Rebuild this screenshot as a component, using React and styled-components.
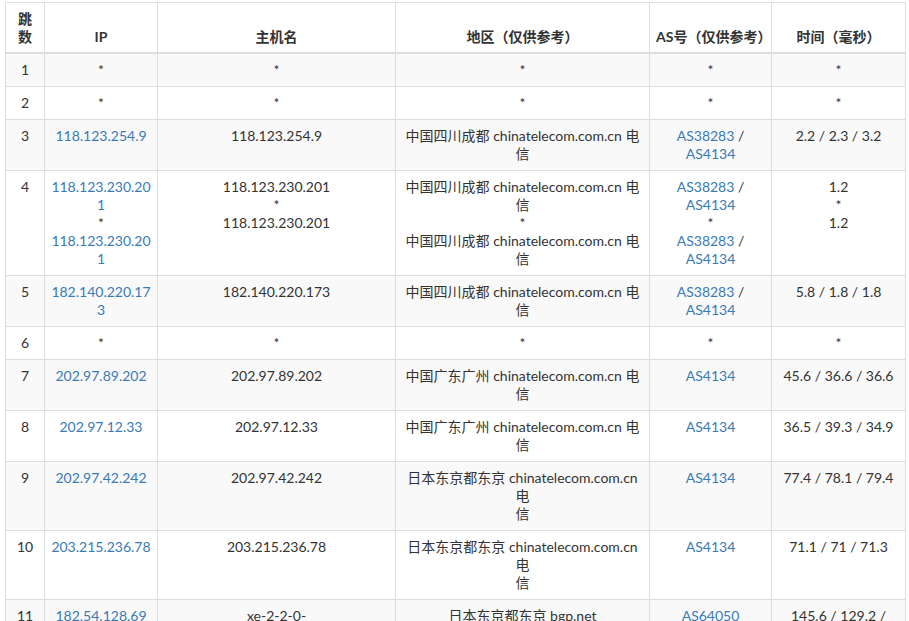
import React from "react";
import styled, { createGlobalStyle } from "styled-components";

const Global = createGlobalStyle`
  body { margin: 0; background: #fff; font-family: "Lato", "Noto Sans CJK SC", sans-serif; color: #333; }
`;
const Wrap = styled.div`padding: 2px 4px 0 5px;`;
const Table = styled.table`
  width: 900px; border-collapse: collapse; table-layout: fixed; font-size: 14px; line-height: 18px;
`;
const Th = styled.th`
  border: 1px solid #ddd; border-bottom: 2px solid #ddd; padding: 7px 6px 6px; font-weight: 700;
  vertical-align: bottom; text-align: center; color: #333;
`;
const Tr = styled.tr`background: ${p => (p.$odd ? "#f9f9f9" : "#fff")};`;
const Td = styled.td`
  border: 1px solid #ddd; padding: 7px 6px 7px; vertical-align: top; text-align: center; word-break: break-word;
`;
const A = styled.span`color: #3a7ab5;`;

const ws = [39, 113, 238, 254, 122, 134];
const S = "*";
const r = "中国四川成都 chinatelecom.com.cn 电信";
const g = "中国广东广州 chinatelecom.com.cn 电信";
const rows = [
  [[S], [S], [S], [S], [S]],
  [[S], [S], [S], [S], [S]],
  [["118.123.254.9"], ["118.123.254.9"], [r], ["AS38283 /|AS4134"], ["2.2 / 2.3 / 3.2"]],
  [["118.123.230.201", S, "118.123.230.201"], ["118.123.230.201", S, "118.123.230.201"], [r, S, r], ["AS38283 /|AS4134", S, "AS38283 /|AS4134"], ["1.2", S, "1.2"]],
  [["182.140.220.173"], ["182.140.220.173"], [r], ["AS38283 /|AS4134"], ["5.8 / 1.8 / 1.8"]],
  [[S], [S], [S], [S], [S]],
  [["202.97.89.202"], ["202.97.89.202"], [g], ["AS4134"], ["45.6 / 36.6 / 36.6"]],
  [["202.97.12.33"], ["202.97.12.33"], [g], ["AS4134"], ["36.5 / 39.3 / 34.9"]],
  [["202.97.42.242"], ["202.97.42.242"], ["日本东京都东京 chinatelecom.com.cn 电|信"], ["AS4134"], ["77.4 / 78.1 / 79.4"]],
  [["203.215.236.78"], ["203.215.236.78"], ["日本东京都东京 chinatelecom.com.cn 电|信"], ["AS4134"], ["71.1 / 71 / 71.3"]],
  [["182.54.128.69"], ["xe-2-2-0-|0.r01.tokyjp01.jp.bb.bgp.net"], ["日本东京都东京 bgp.net"], ["AS64050"], ["145.6 / 129.2 /|134.3"]],
  [["137.220.185.70"], ["137.220.185.70"], ["日本东京都东京 rackip.com"], ["AS64050"], ["78.6 / 79.1 / 77"]],
];

function Lines({ items, link }) {
  const out = [];
  items.forEach((it, i) => {
    if (i) out.push(<br key={"b" + i} />);
    if (it === S) { out.push(<span key={i}>*</span>); return; }
    it.split("|").forEach((p, k) => {
      if (k) out.push(<br key={`x${i}${k}`} />);
      if (link) {
        const m = p.match(/^(AS\d+|[\d.]+)(.*)$/);
        if (m) { out.push(<A key={`a${i}${k}`}>{m[1]}</A>); if (m[2]) out.push(<span key={`c${i}${k}`}>{m[2]}</span>); return; }
      }
      out.push(<span key={`t${i}${k}`}>{p}</span>);
    });
  });
  return out;
}

export default function App() {
  return (
    <Wrap>
      <Global />
      <Table>
        <colgroup>{ws.map((w, i) => <col key={i} style={{ width: w }} />)}</colgroup>
        <thead>
          <tr>
            <Th>跳数</Th><Th>IP</Th><Th>主机名</Th><Th>地区（仅供参考）</Th><Th>AS号（仅供参考）</Th><Th>时间（毫秒）</Th>
          </tr>
        </thead>
        <tbody>
          {rows.map((row, i) => (
            <Tr key={i} $odd={i % 2 === 0}>
              <Td>{i + 1}</Td>
              {row.map((c, k) => (
                <Td key={k}><Lines items={c} link={k === 0 || k === 3} /></Td>
              ))}
            </Tr>
          ))}
        </tbody>
      </Table>
    </Wrap>
  );
}
